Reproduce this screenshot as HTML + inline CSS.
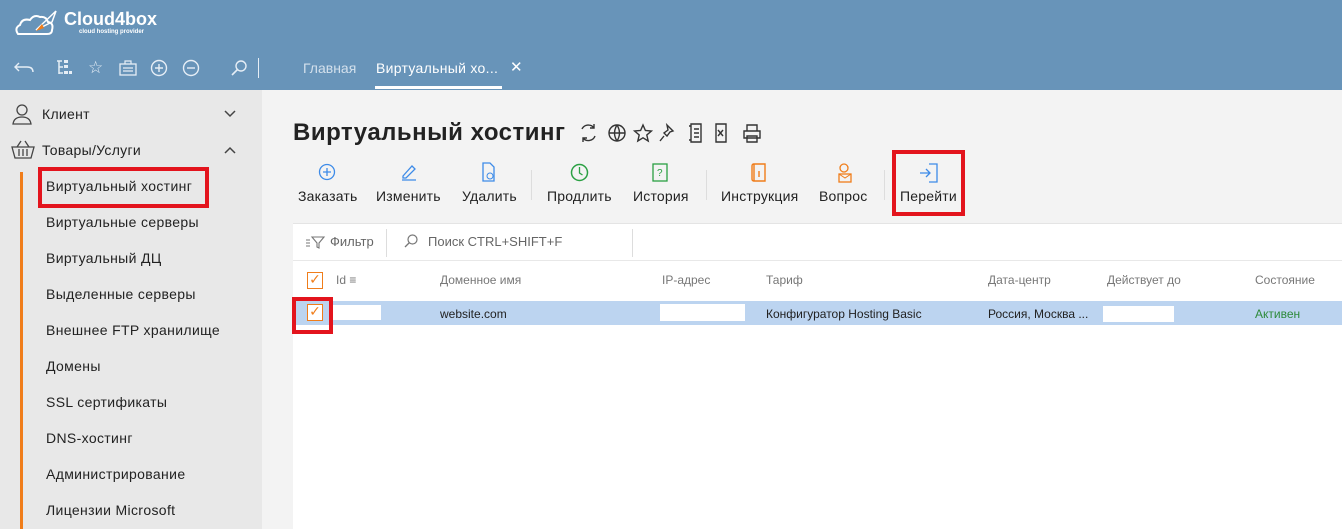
<!DOCTYPE html>
<html><head><meta charset="utf-8"><style>
*{margin:0;padding:0;box-sizing:border-box}
body{width:1342px;height:529px;overflow:hidden;font-family:"Liberation Sans","DejaVu Sans",sans-serif;background:#f3f3f3;position:relative;color:#222}
.hdr{position:absolute;left:0;top:0;width:1342px;height:90px;background:#6894b9}
.abs{position:absolute}
.side{position:absolute;left:0;top:90px;width:262px;height:439px;background:#e8e8e8}
.si{position:absolute;left:46px;font-size:14px;color:#222;letter-spacing:0.35px}
.tb{position:absolute;top:188px;font-size:14px;color:#222;letter-spacing:0.2px}
.th{position:absolute;top:273px;font-size:12px;color:#777}
.td{position:absolute;top:307px;font-size:12px;color:#222}
.red{position:absolute;border:4px solid #e3141d}
</style></head><body>
<div class="hdr">
 <svg class="abs" style="left:14px;top:8px" width="50" height="30" viewBox="0 0 50 30"><path d="M4 26 Q0 20 6 17 Q8 10 16 12 Q20 6 26 9 Q32 8 34 14 Q40 15 38 22 Q38 26 33 26 Z" fill="none" stroke="#fff" stroke-width="2"/><path d="M22 22 L42 3 L38 14 Z" fill="none" stroke="#fff" stroke-width="1.5"/><path d="M22 23 L28 16 L30 20 Z" fill="#f07d1a"/></svg>
 <div class="abs" style="left:64px;top:9px;color:#fff;font-weight:bold;font-size:18px">Cloud4box</div>
 <div class="abs" style="left:79px;top:29px;color:#fff;font-size:6px;font-weight:bold">cloud hosting provider</div>
 <svg class="abs" style="left:12px;top:60px" width="22" height="16"><path d="M21 12Q21 7 15 7H3M7 3L3 7l4 4" fill="none" stroke="#e6eef6" stroke-width="1.4"/></svg>
 <svg class="abs" style="left:55px;top:59px" width="18" height="18"><path d="M2 2h5M4 2v13M4 8h4M4 14h4" stroke="#e6eef6" stroke-width="1.5" fill="none"/><rect x="9" y="1" width="4" height="3" fill="#e6eef6"/><rect x="9" y="6" width="4" height="3" fill="#e6eef6"/><rect x="9" y="12" width="4" height="3" fill="#e6eef6"/><rect x="14" y="12" width="3" height="3" fill="#e6eef6"/></svg>
 <div class="abs" style="left:88px;top:58px;color:#e6eef6;font-size:17px">☆</div>
 <svg class="abs" style="left:119px;top:60px" width="18" height="16"><rect x="1" y="4" width="16" height="11" fill="none" stroke="#e6eef6" stroke-width="1.3"/><path d="M6 4V1h6v3M4 8h10M4 11h10" stroke="#e6eef6" stroke-width="1.2" fill="none"/></svg>
 <svg class="abs" style="left:150px;top:59px" width="18" height="18"><circle cx="9" cy="9" r="7.5" fill="none" stroke="#e6eef6" stroke-width="1.4"/><path d="M9 5v8M5 9h8" stroke="#e6eef6" stroke-width="1.4"/></svg>
 <svg class="abs" style="left:182px;top:59px" width="18" height="18"><circle cx="9" cy="9" r="7.5" fill="none" stroke="#e6eef6" stroke-width="1.4"/><path d="M5 9h8" stroke="#e6eef6" stroke-width="1.4"/></svg>
 <svg class="abs" style="left:230px;top:59px" width="18" height="18"><circle cx="11" cy="7" r="5" fill="none" stroke="#e6eef6" stroke-width="1.4"/><path d="M7.5 10.5L2 16" stroke="#e6eef6" stroke-width="1.6"/></svg>
 <div class="abs" style="left:258px;top:58px;width:1px;height:20px;background:#e6eef6"></div>
 <div class="abs" style="left:303px;top:60px;color:#d3e0ec;font-size:14px">Главная</div>
 <div class="abs" style="left:376px;top:60px;color:#fff;font-size:14px;letter-spacing:0.3px">Виртуальный хо...</div>
 <div class="abs" style="left:510px;top:58px;color:#fff;font-size:15px;font-weight:bold">✕</div>
 <div class="abs" style="left:375px;top:86px;width:127px;height:3px;background:#fff"></div>
</div>
<div class="side">
 <svg class="abs" style="left:11px;top:13px" width="22" height="22"><circle cx="11" cy="7" r="5" fill="none" stroke="#444" stroke-width="1.3"/><path d="M2 21q1-7 9-7t9 7z" fill="none" stroke="#444" stroke-width="1.3"/></svg>
 <div class="abs" style="left:42px;top:16px;font-size:14px;letter-spacing:0.3px">Клиент</div>
 <svg class="abs" style="left:224px;top:20px" width="12" height="8"><path d="M1 1l5 5 5-5" fill="none" stroke="#444" stroke-width="1.5"/></svg>
 <svg class="abs" style="left:11px;top:50px" width="24" height="20"><path d="M1 7h22l-3 11H4z M6 7l4-6M18 7l-4-6M8 9v7M12 9v7M16 9v7" fill="none" stroke="#444" stroke-width="1.3"/></svg>
 <div class="abs" style="left:42px;top:52px;font-size:14px;letter-spacing:0.3px">Товары/Услуги</div>
 <svg class="abs" style="left:224px;top:56px" width="12" height="8"><path d="M1 7l5-5 5 5" fill="none" stroke="#444" stroke-width="1.5"/></svg>
 <div class="abs" style="left:20px;top:82px;width:3px;height:357px;background:#f07d1a"></div>
</div>
<div class="si" style="top:178px">Виртуальный хостинг</div>
<div class="si" style="top:214px">Виртуальные серверы</div>
<div class="si" style="top:250px">Виртуальный ДЦ</div>
<div class="si" style="top:286px">Выделенные серверы</div>
<div class="si" style="top:322px">Внешнее FTP хранилище</div>
<div class="si" style="top:358px">Домены</div>
<div class="si" style="top:394px">SSL сертификаты</div>
<div class="si" style="top:430px">DNS-хостинг</div>
<div class="si" style="top:466px">Администрирование</div>
<div class="si" style="top:502px">Лицензии Microsoft</div>
<div class="red" style="left:38px;top:167px;width:171px;height:41px"></div>

<div class="abs" style="left:293px;top:119px;font-size:24px;font-weight:bold;color:#222;letter-spacing:0.5px">Виртуальный хостинг</div>
<svg class="abs" style="left:579px;top:123px" width="190" height="20" fill="none" stroke="#333" stroke-width="1.4">
 <path d="M3 6A7 7 0 0 1 15 5M15 1v4h-4M16 13A7 7 0 0 1 4 15M4 19v-4h4"/>
 <circle cx="38" cy="10" r="8"/><path d="M30 10h16M38 2q-5 8 0 16M38 2q5 8 0 16"/>
 <path d="M64 2l2.4 5.5 6 .5-4.6 4 1.4 6-5.2-3.2-5.2 3.2 1.4-6-4.6-4 6-.5z"/>
 <path d="M88 2l6 6-3 1-3 4-3-3 4-3zM85 13l-4 5"/>
 <path d="M112 1h10v18h-10zM110 3h2M110 17h2M115 6h5M115 10h5M115 14h5"/>
 <path d="M137 1h10v18h-10zM139 7l5 6M144 7l-5 6"/>
 <path d="M165 8h16v7h-16zM168 8V2h10v6M168 13h10v6h-10z"/>
</svg>

<svg class="abs" style="left:318px;top:163px" width="18" height="18"><circle cx="9" cy="9" r="7.5" fill="none" stroke="#3d8be8" stroke-width="1.3"/><path d="M9 5v8M5 9h8" stroke="#3d8be8" stroke-width="1.3"/></svg>
<svg class="abs" style="left:400px;top:163px" width="18" height="18"><path d="M3 13L12 3l3 3-9 9H3zM2 17h14" fill="none" stroke="#3d8be8" stroke-width="1.3"/></svg>
<svg class="abs" style="left:480px;top:162px" width="16" height="20"><path d="M3 1h7l4 4v14H3z" fill="none" stroke="#3d8be8" stroke-width="1.3"/><circle cx="10" cy="14" r="3" fill="none" stroke="#3d8be8"/></svg>
<svg class="abs" style="left:570px;top:163px" width="19" height="19"><circle cx="9.5" cy="9.5" r="8" fill="none" stroke="#2aa043" stroke-width="1.5"/><path d="M9.5 4v6l3 2" fill="none" stroke="#2aa043" stroke-width="1.3"/></svg>
<svg class="abs" style="left:652px;top:163px" width="16" height="19"><rect x="1" y="1" width="14" height="17" fill="none" stroke="#2aa043" stroke-width="1.3"/><text x="5" y="13" font-size="10" fill="#2aa043" font-family="Liberation Sans">?</text></svg>
<svg class="abs" style="left:751px;top:162px" width="17" height="21"><path d="M3 2h11v17H3zM3 2q-2 0-2 2v13q0 2 2 2" fill="none" stroke="#f07d1a" stroke-width="1.4"/><path d="M8 15V9" stroke="#f07d1a" stroke-width="1.4"/></svg>
<svg class="abs" style="left:835px;top:162px" width="18" height="21"><circle cx="9" cy="6" r="4" fill="none" stroke="#f07d1a" stroke-width="1.3"/><rect x="4" y="12" width="12" height="8" fill="none" stroke="#f07d1a" stroke-width="1.3"/><path d="M4 12l6 4 6-4" fill="none" stroke="#f07d1a"/></svg>
<svg class="abs" style="left:919px;top:163px" width="20" height="20"><path d="M10 1h8v18h-8" fill="none" stroke="#3d8be8" stroke-width="1.3"/><path d="M1 10h10M7 6l4 4-4 4" fill="none" stroke="#3d8be8" stroke-width="1.3"/></svg>
<div class="tb" style="left:298px">Заказать</div>
<div class="tb" style="left:376px">Изменить</div>
<div class="tb" style="left:462px">Удалить</div>
<div class="abs" style="left:531px;top:170px;width:1px;height:30px;background:#ddd"></div>
<div class="tb" style="left:547px">Продлить</div>
<div class="tb" style="left:633px">История</div>
<div class="abs" style="left:706px;top:170px;width:1px;height:30px;background:#ddd"></div>
<div class="tb" style="left:721px">Инструкция</div>
<div class="tb" style="left:819px">Вопрос</div>
<div class="abs" style="left:884px;top:170px;width:1px;height:30px;background:#ddd"></div>
<div class="tb" style="left:900px">Перейти</div>
<div class="red" style="left:892px;top:150px;width:73px;height:66px"></div>

<div class="abs" style="left:293px;top:223px;width:1049px;height:306px;background:#fff;border-top:1px solid #e4e4e4"></div>
<div class="abs" style="left:293px;top:260px;width:1049px;height:1px;background:#e8e8e8"></div>
<svg class="abs" style="left:305px;top:235px" width="22" height="14" fill="none" stroke="#777" stroke-width="1.1"><path d="M1 5h4M1 8h4M1 11h4M7 2h12l-5 6v5l-2-1V8z"/></svg>
<div class="abs" style="left:330px;top:234px;font-size:13px;color:#666">Фильтр</div>
<div class="abs" style="left:386px;top:229px;width:1px;height:28px;background:#ddd"></div>
<svg class="abs" style="left:404px;top:234px" width="14" height="14"><circle cx="8.5" cy="5.5" r="4.5" fill="none" stroke="#777" stroke-width="1.2"/><path d="M5.5 8.5L1 13" stroke="#777" stroke-width="1.3"/></svg>
<div class="abs" style="left:428px;top:234px;font-size:13px;color:#666">Поиск CTRL+SHIFT+F</div>
<div class="abs" style="left:632px;top:229px;width:1px;height:28px;background:#ddd"></div>

<div class="abs" style="left:307px;top:272px;width:16px;height:17px;border:1.5px solid #f07d1a;background:#fff;color:#f07d1a;font-size:14px;line-height:13px;text-align:center">✓</div>
<div class="th" style="left:336px">Id ≡</div>
<div class="th" style="left:440px">Доменное имя</div>
<div class="th" style="left:662px">IP-адрес</div>
<div class="th" style="left:766px">Тариф</div>
<div class="th" style="left:988px">Дата-центр</div>
<div class="th" style="left:1107px">Действует до</div>
<div class="th" style="left:1255px">Состояние</div>

<div class="abs" style="left:293px;top:301px;width:1049px;height:24px;background:#bcd4f0"></div>
<div class="abs" style="left:307px;top:304px;width:16px;height:17px;border:1.5px solid #f07d1a;background:#fff;color:#f07d1a;font-size:14px;line-height:13px;text-align:center">✓</div>
<div class="abs" style="left:333px;top:305px;width:48px;height:15px;background:#fff"></div>
<div class="td" style="left:440px">website.com</div>
<div class="abs" style="left:660px;top:304px;width:85px;height:17px;background:#fff"></div>
<div class="td" style="left:766px">Конфигуратор Hosting Basic</div>
<div class="td" style="left:988px">Россия, Москва ...</div>
<div class="abs" style="left:1103px;top:306px;width:71px;height:16px;background:#fff"></div>
<div class="td" style="left:1255px;color:#2d8a3a">Активен</div>
<div class="red" style="left:292px;top:297px;width:41px;height:37px"></div>
</body></html>
